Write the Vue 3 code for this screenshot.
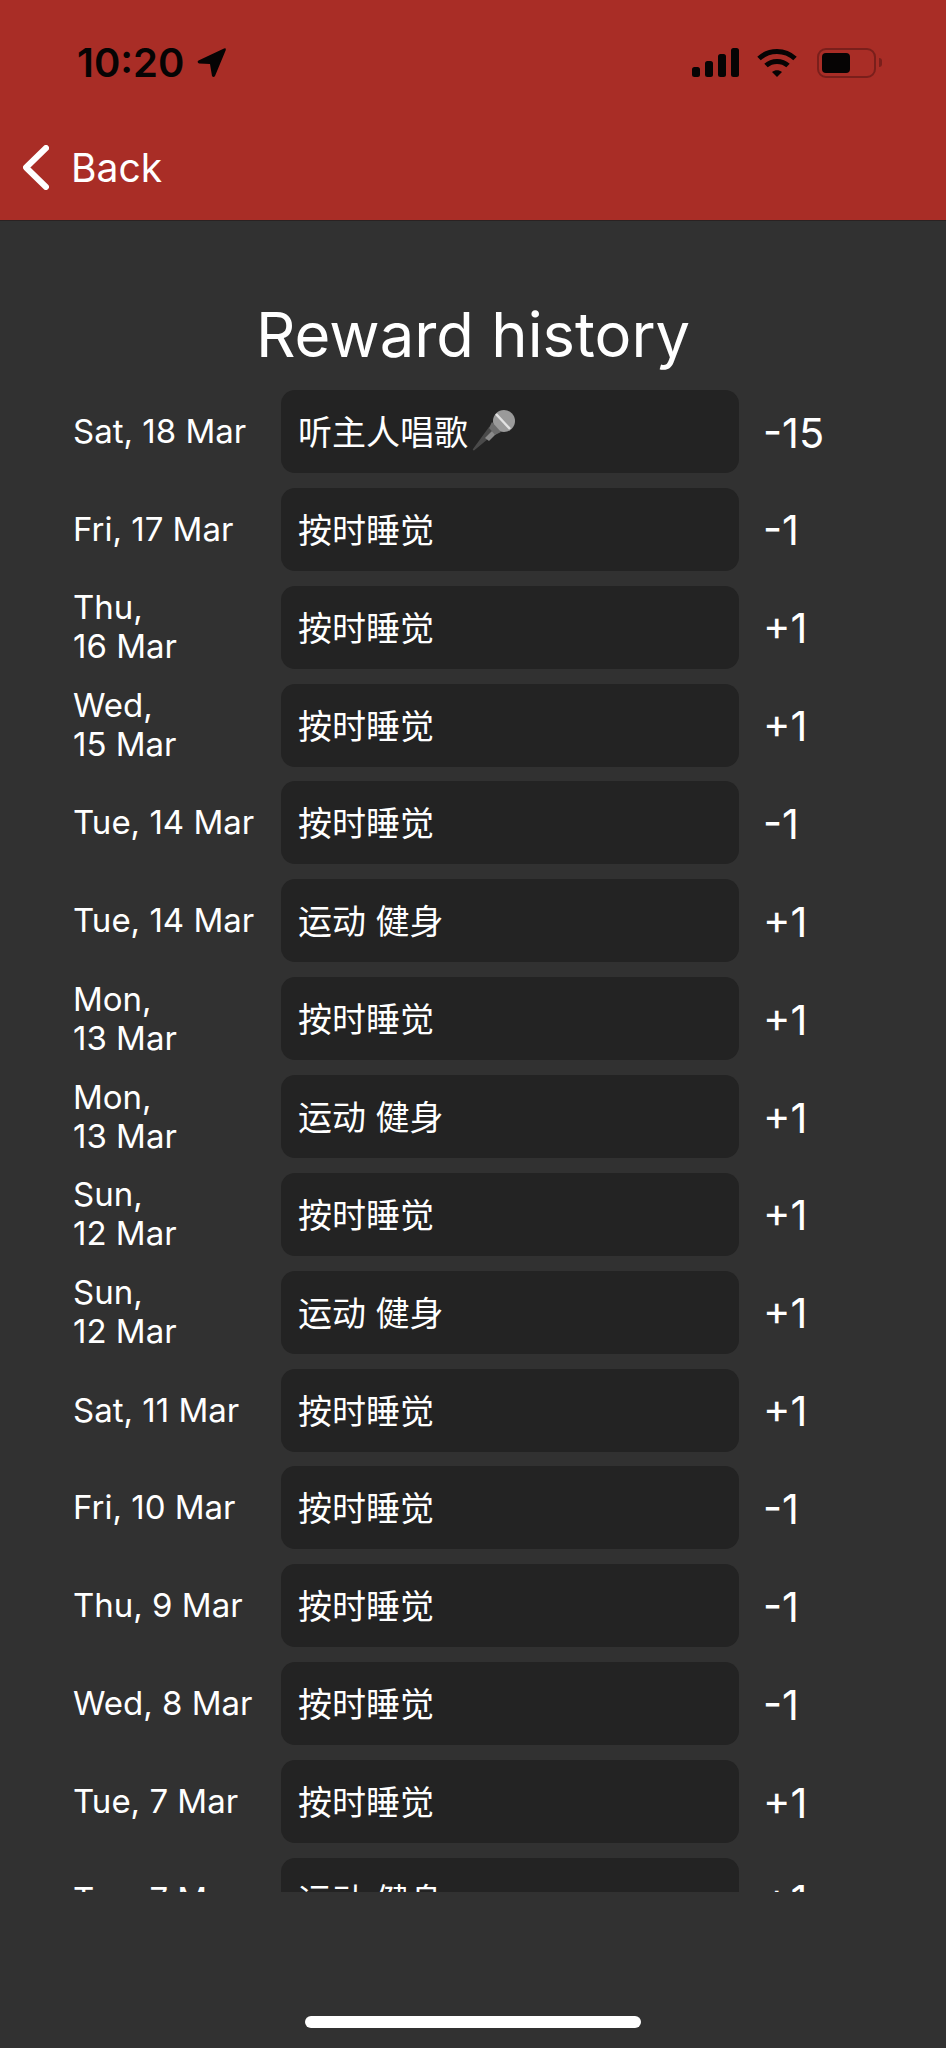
<template>
  <div class="screen">
    <header class="top">
      <div class="status">
        <div class="time-wrap">
          <span class="time">10:20</span>
          <svg class="arrow" width="31" height="31" viewBox="0 0 31 31">
            <path d="M2.5 13.5 L28 1.5 Q30.5 0.6 29.7 3.2 L19 29 Q17.5 31 16 29 L14 17 L3 16.5 Q0.5 15 2.5 13.5 Z" fill="#060404" />
          </svg>
        </div>
        <div class="indicators">
          <svg width="47" height="29" viewBox="0 0 47 29" fill="#060404">
            <rect x="0" y="19" width="8" height="10" rx="2.5" />
            <rect x="13" y="13" width="8" height="16" rx="2.5" />
            <rect x="26" y="6" width="8" height="23" rx="2.5" />
            <rect x="39" y="0" width="8" height="29" rx="2.5" />
          </svg>
          <svg class="wifi" width="40" height="29" viewBox="0 0 40 29" fill="none" stroke="#060404" stroke-width="5">
            <path d="M2 10.5 C12 1 28 1 38 10.5" />
            <path d="M9 17.5 C15 12 25 12 31 17.5" />
            <path d="M15 24 L20 29 L25 24 C22 21.5 18 21.5 15 24 Z" fill="#060404" stroke="none" />
          </svg>
          <div class="battery-wrap">
            <div class="battery"><div class="level"></div></div>
            <div class="nub"></div>
          </div>
        </div>
      </div>
      <div class="nav">
        <svg width="26" height="45" viewBox="0 0 26 45" fill="none" stroke="#fff" stroke-width="6" stroke-linecap="round" stroke-linejoin="round">
          <path d="M23 3 L3 22.5 L23 42" />
        </svg>
        <span class="back">Back</span>
      </div>
    </header>

    <main class="content">
      <h1 class="title">Reward history</h1>
      <div class="list">
        <div v-for="(item, i) in history" :key="i" class="row">
          <div class="date">{{ item.date }}</div>
          <div class="card">
            <span>{{ item.name }}</span>
            <svg v-if="item.mic" class="mic" width="44" height="41" viewBox="0 0 44 41">
              <path d="M1 39 Q0 40 2 40.5 L22 24 L17 17 Z" fill="#4a4a4a" />
              <path d="M13 28 L21 20 L24 24 L17 31 Z" fill="#8a8a8a" />
              <circle cx="32" cy="11" r="11" fill="#9a9a9a" />
              <path d="M24 4 L38 19" stroke="#e2e2e2" stroke-width="2.5" />
              <path d="M20 12 L29 22 L23 25 L17 18 Z" fill="#6c6c6c" />
            </svg>
          </div>
          <div class="amount">{{ item.amount }}</div>
        </div>
      </div>
      <div class="home-bar"></div>
    </main>
  </div>
</template>

<script setup>
const sleep = '按时睡觉';
const gym = '运动 健身';

const history = [
  { date: 'Sat, 18 Mar', name: '听主人唱歌', amount: '-15', mic: true },
  { date: 'Fri, 17 Mar', name: sleep, amount: '-1' },
  { date: 'Thu,\n16 Mar', name: sleep, amount: '+1' },
  { date: 'Wed,\n15 Mar', name: sleep, amount: '+1' },
  { date: 'Tue, 14 Mar', name: sleep, amount: '-1' },
  { date: 'Tue, 14 Mar', name: gym, amount: '+1' },
  { date: 'Mon,\n13 Mar', name: sleep, amount: '+1' },
  { date: 'Mon,\n13 Mar', name: gym, amount: '+1' },
  { date: 'Sun,\n12 Mar', name: sleep, amount: '+1' },
  { date: 'Sun,\n12 Mar', name: gym, amount: '+1' },
  { date: 'Sat, 11 Mar', name: sleep, amount: '+1' },
  { date: 'Fri, 10 Mar', name: sleep, amount: '-1' },
  { date: 'Thu, 9 Mar', name: sleep, amount: '-1' },
  { date: 'Wed, 8 Mar', name: sleep, amount: '-1' },
  { date: 'Tue, 7 Mar', name: sleep, amount: '+1' },
  { date: 'Tue, 7 Mar', name: gym, amount: '+1' },
];
</script>

<style>
body {
  background: #313131;
}
</style>

<style scoped>
.screen {
  width: 946px;
  height: 2048px;
  overflow: hidden;
  display: flex;
  flex-direction: column;
  background: #313131;
  color: #fff;
  font-family: Inter, "Noto Sans CJK SC", sans-serif;
}

.top {
  flex: none;
  height: 173px;
  background: #a92d26;
  border-bottom: 1px solid #2a2222;
  padding: 47px 64px 0 0;
}

.status {
  display: flex;
  justify-content: space-between;
  align-items: center;
  height: 31px;
  padding-left: 77px;
}

.time-wrap {
  display: flex;
  align-items: center;
  gap: 12px;
}

.time {
  font-size: 40px;
  font-weight: 600;
  line-height: 31px;
  color: #060404;
}

.indicators {
  display: flex;
  align-items: center;
  gap: 18px;
}

.wifi {
  margin-right: 2px;
}

.battery-wrap {
  display: flex;
  align-items: center;
  gap: 3px;
}

.battery {
  width: 59px;
  height: 30px;
  box-sizing: border-box;
  border: 2px solid #7a1f1b;
  border-radius: 9px;
  padding: 3px;
}

.level {
  width: 28px;
  height: 100%;
  background: #060404;
  border-radius: 4px;
}

.nub {
  width: 3px;
  height: 9px;
  background: #7a1f1b;
  border-radius: 0 3px 3px 0;
}

.nav {
  display: flex;
  align-items: center;
  gap: 22px;
  margin-top: 66px;
  padding-left: 23px;
}

.back {
  font-size: 39px;
}

.content {
  flex: 1;
  display: flex;
  flex-direction: column;
  min-height: 0;
}

.title {
  margin: 77px 0 0;
  height: 92px;
  font-size: 61.5px;
  font-weight: 400;
  line-height: 74px;
  text-align: center;
}

.list {
  height: 1502px;
  overflow: hidden;
  padding-left: 73px;
}

.row {
  display: grid;
  grid-template-columns: 184px 458px auto;
  column-gap: 24px;
  align-items: center;
  height: 83px;
  margin-bottom: 14.87px;
}

.date {
  font-size: 33px;
  line-height: 39px;
  white-space: pre;
}

.card {
  height: 83px;
  display: flex;
  align-items: center;
  padding: 0 0 2px 17px;
  box-sizing: border-box;
  background: #232323;
  border-radius: 14px;
  font-size: 34px;
}

.mic {
  margin-left: 4px;
}

.amount {
  font-size: 41.5px;
  padding-top: 2px;
}

.home-bar {
  width: 336px;
  height: 12px;
  margin: 124px auto 0;
  background: #fff;
  border-radius: 6px;
}
</style>
